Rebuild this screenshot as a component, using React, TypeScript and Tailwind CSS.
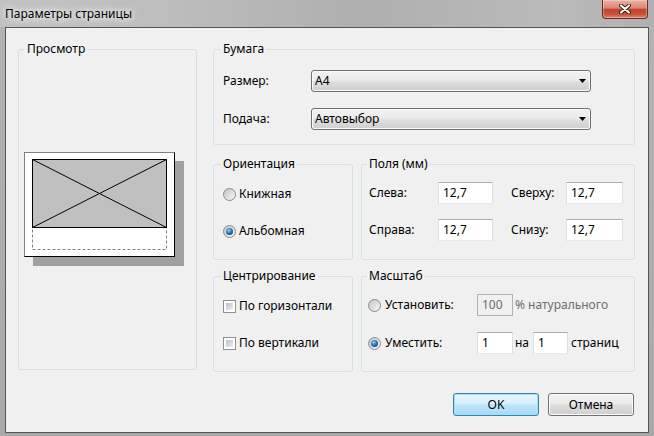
import React from "react";

function Radio({ checked }: { checked?: boolean }) {
  return (
    <span className="w-[13px] h-[13px] shrink-0 rounded-full border border-[#8a8a8a] bg-[linear-gradient(135deg,#c4c4c4,#f8f8f8)] flex items-center justify-center">
      {checked && (
        <span className="w-[7px] h-[7px] rounded-full bg-[radial-gradient(circle_at_40%_35%,#8fd3f5,#1b6fb8_50%,#0a3a6b)]" />
      )}
    </span>
  );
}

function Checkbox() {
  return (
    <span className="w-[13px] h-[13px] shrink-0 border border-[#8e8f8f] bg-white p-[2px]">
      <span className="block w-full h-full bg-[linear-gradient(135deg,#b9bec5,#f0f0f0)]" />
    </span>
  );
}

function TextBox({ value, w, disabled }: { value: string; w: string; disabled?: boolean }) {
  return (
    <div
      className={`h-[22px] ${w} shrink-0 flex items-center pl-[4px] border ${
        disabled
          ? "bg-[#f0f0f0] border-[#adb2b5] text-[#6d6d6d]"
          : "bg-white border-t-[#abadb3] border-x-[#dbdfe6] border-b-[#e3e9ef]"
      }`}
    >
      {value}
    </div>
  );
}

function Select({ value }: { value: string }) {
  return (
    <div className="h-[22px] w-[280px] rounded-[3px] border border-[#707070] bg-[linear-gradient(#f2f2f2,#ebebeb_45%,#dddddd_55%,#cfcfcf)] shadow-[inset_0_0_0_1px_#fafafa] flex items-center justify-between pl-[3px] pr-[4px]">
      <span>{value}</span>
      <svg width="7" height="4" viewBox="0 0 7 4">
        <polygon points="0,0 7,0 3.5,4" fill="#000" />
      </svg>
    </div>
  );
}

function Preview() {
  return (
    <div className="mt-[95px] w-[151px] h-[105px] bg-white border border-t-[#808080] border-l-[#808080] border-r-black border-b-black shadow-[9px_9px_0_#a0a0a0]">
      <svg width="149" height="103" viewBox="0 0 149 103">
        <rect x="7.5" y="6.5" width="134" height="90" fill="none" stroke="#808080" strokeDasharray="3 2" />
        <rect x="7.5" y="6.5" width="134" height="68" fill="#c0c0c0" stroke="#000" />
        <line x1="7.5" y1="6.5" x2="141.5" y2="74.5" stroke="#000" />
        <line x1="141.5" y1="6.5" x2="7.5" y2="74.5" stroke="#000" />
      </svg>
    </div>
  );
}

export default function App() {
  return (
    <div className="w-[654px] h-[436px] overflow-hidden flex flex-col bg-[linear-gradient(to_bottom,#bcbcbc,#b2b2b2_40px,#a9a9a9)] font-['Segoe_UI','Noto_Sans',sans-serif] text-[12px] leading-[16px] text-black">
      {/* title bar */}
      <div className="h-[27px] shrink-0 flex justify-between bg-[linear-gradient(to_right,#c2c2c2,#bdbdbd_25%,#afafaf_55%,#bababa_85%,#b0b0b0)]">
        <span className="pl-[5px] pt-[6px] [text-shadow:0_0_6px_#fff,0_0_10px_#fff]">Параметры страницы</span>
        <div className="mr-[6px] h-[19px] w-[46px] rounded-b-[4px] border border-t-0 border-[#6b2a22] bg-[linear-gradient(#ebb2a4,#d88776_45%,#c4412c_52%,#c9533b_80%,#e0896c)] shadow-[inset_0_0_0_1px_rgba(255,255,255,0.3)] flex items-center justify-center">
          <svg width="12" height="10" viewBox="0 0 12 10">
            <path d="M2 1.5 L10 8.5 M10 1.5 L2 8.5" stroke="#3b1a14" strokeWidth="4" strokeLinecap="round" />
            <path d="M2 1.5 L10 8.5 M10 1.5 L2 8.5" stroke="#fff" strokeWidth="2.2" strokeLinecap="round" />
          </svg>
        </div>
      </div>

      {/* client area */}
      <div className="mx-[5px] h-[406px] border border-[#555555] bg-[#f0f0f0] flex flex-col pl-[12px] pr-[13px] pt-[13px]">
        <div className="flex gap-[16px]">
          <fieldset className="w-[179px] h-[329px] border border-[#d5dfe5] rounded-[3px] px-[5px]">
            <legend className="pl-[3px] pr-[2px]">Просмотр</legend>
            <Preview />
          </fieldset>

          <div className="w-[422px] flex flex-col">
            <fieldset className="h-[104px] border border-[#d5dfe5] rounded-[3px] px-[7px]">
              <legend className="px-[2px]">Бумага</legend>
              <div className="mt-[13px] h-[22px] flex items-center">
                <span className="w-[90px] pl-[2px]">Размер:</span>
                <Select value="A4" />
              </div>
              <div className="mt-[16px] h-[22px] flex items-center">
                <span className="w-[90px] pl-[2px]">Подача:</span>
                <Select value="Автовыбор" />
              </div>
            </fieldset>

            <div className="mt-[11px] flex gap-[8px]">
              <fieldset className="w-[140px] h-[104px] border border-[#d5dfe5] rounded-[3px] px-[7px]">
                <legend className="px-[2px]">Ориентация</legend>
                <div className="mt-[14px] h-[16px] pl-[2px] flex items-center gap-[3px]">
                  <Radio />
                  <span>Книжная</span>
                </div>
                <div className="mt-[21px] h-[16px] pl-[2px] flex items-center gap-[3px]">
                  <Radio checked />
                  <span>Альбомная</span>
                </div>
              </fieldset>

              <fieldset className="w-[274px] h-[104px] border border-[#d5dfe5] rounded-[3px] px-[5px]">
                <legend className="px-[2px]">Поля (мм)</legend>
                <div className="mt-[10px] flex items-center">
                  <span className="w-[71px] pl-[2px]">Слева:</span>
                  <TextBox value="12,7" w="w-[55px]" />
                  <span className="ml-[18px] w-[55px]">Сверху:</span>
                  <TextBox value="12,7" w="w-[57px]" />
                </div>
                <div className="mt-[15px] flex items-center">
                  <span className="w-[71px] pl-[2px]">Справа:</span>
                  <TextBox value="12,7" w="w-[55px]" />
                  <span className="ml-[18px] w-[55px]">Снизу:</span>
                  <TextBox value="12,7" w="w-[57px]" />
                </div>
              </fieldset>
            </div>

            <div className="mt-[8px] flex gap-[8px]">
              <fieldset className="w-[140px] h-[104px] border border-[#d5dfe5] rounded-[3px] px-[7px]">
                <legend className="px-[2px]">Центрирование</legend>
                <div className="mt-[14px] h-[16px] pl-[2px] flex items-center gap-[3px]">
                  <Checkbox />
                  <span>По горизонтали</span>
                </div>
                <div className="mt-[21px] h-[16px] pl-[2px] flex items-center gap-[3px]">
                  <Checkbox />
                  <span>По вертикали</span>
                </div>
              </fieldset>

              <fieldset className="w-[274px] h-[104px] border border-[#d5dfe5] rounded-[3px] px-[5px]">
                <legend className="px-[2px]">Масштаб</legend>
                <div className="mt-[10px] flex items-center">
                  <div className="w-[110px] pl-[1px] flex items-center gap-[4px]">
                    <Radio />
                    <span>Установить:</span>
                  </div>
                  <TextBox value="100" w="w-[36px]" disabled />
                  <span className="ml-[2px] text-[#6d6d6d]">% натурального</span>
                </div>
                <div className="mt-[16px] flex items-center">
                  <div className="w-[110px] pl-[1px] flex items-center gap-[4px]">
                    <Radio checked />
                    <span>Уместить:</span>
                  </div>
                  <TextBox value="1" w="w-[36px]" />
                  <span className="w-[20px] pl-[2px]">на</span>
                  <TextBox value="1" w="w-[35px]" />
                  <span className="ml-[3px]">страниц</span>
                </div>
              </fieldset>
            </div>
          </div>
        </div>

        <div className="mt-[21px] mr-[1px] flex justify-end gap-[9px]">
          <button className="w-[86px] h-[23px] rounded-[3px] border border-[#3c7fb1] bg-[linear-gradient(#eaf6fd,#d9f0fc_45%,#bee6fd_52%,#a7d9f5)] shadow-[inset_0_0_0_1px_#9fe2f8]">
            OK
          </button>
          <button className="w-[86px] h-[23px] rounded-[3px] border border-[#707070] bg-[linear-gradient(#f2f2f2,#ebebeb_45%,#dddddd_52%,#cfcfcf)] shadow-[inset_0_0_0_1px_#fbfbfb]">
            Отмена
          </button>
        </div>
      </div>
    </div>
  );
}
